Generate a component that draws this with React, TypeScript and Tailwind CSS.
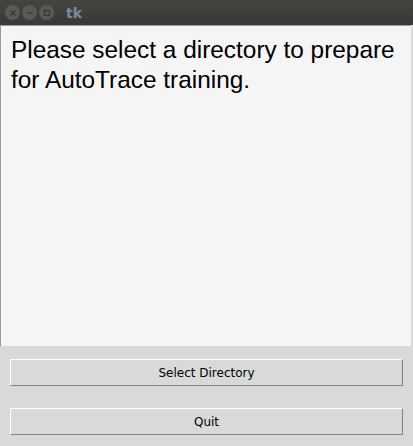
import React from 'react';

function TitleButton({ glyph }: { glyph: 'close' | 'min' | 'max' }) {
  return (
    <div className="w-[15px] h-[15px] rounded-full bg-[#5a5955] flex items-center justify-center">
      <svg width="8" height="8" viewBox="0 0 8 8" fill="none" stroke="#3a3935" strokeWidth="1.4">
        {glyph === 'close' && <path d="M1.5 1.5 L6.5 6.5 M6.5 1.5 L1.5 6.5" />}
        {glyph === 'min' && <path d="M1 4 H7" />}
        {glyph === 'max' && <rect x="1.5" y="1.5" width="5" height="5" />}
      </svg>
    </div>
  );
}

function TkButton({ label }: { label: string }) {
  return (
    <button className="w-full h-[27px] bg-[#d9d9d9] border border-t-white border-l-white border-b-[#828282] border-r-[#828282] text-[12px] text-black font-['DejaVu_Sans',sans-serif] flex items-center justify-center">
      {label}
    </button>
  );
}

export default function App() {
  return (
    <div className="w-[413px] h-[446px] flex flex-col bg-[#d9d9d9] overflow-hidden">
      <div className="h-[25px] shrink-0 bg-gradient-to-b from-[#45443f] to-[#3a3935] flex items-center pl-[5px] gap-[2px]">
        <TitleButton glyph="close" />
        <TitleButton glyph="min" />
        <TitleButton glyph="max" />
        <span className="ml-[10px] text-[14px] font-bold text-[#7d8aa0] font-['DejaVu_Sans',sans-serif] leading-none">tk</span>
      </div>
      <div className="h-[321px] shrink-0 mr-[2px] bg-[#f5f5f5] border-t border-l border-[#9a9a9a] px-[10px] pt-[9px]">
        <p className="text-[24.4px] leading-[30px] text-black font-['Liberation_Sans',Arial,sans-serif] whitespace-nowrap">
          Please select a directory to prepare
          <br />
          for AutoTrace training.
        </p>
      </div>
      <div className="flex flex-col gap-[22px] px-[10px] pt-[13px]">
        <TkButton label="Select Directory" />
        <TkButton label="Quit" />
      </div>
    </div>
  );
}
